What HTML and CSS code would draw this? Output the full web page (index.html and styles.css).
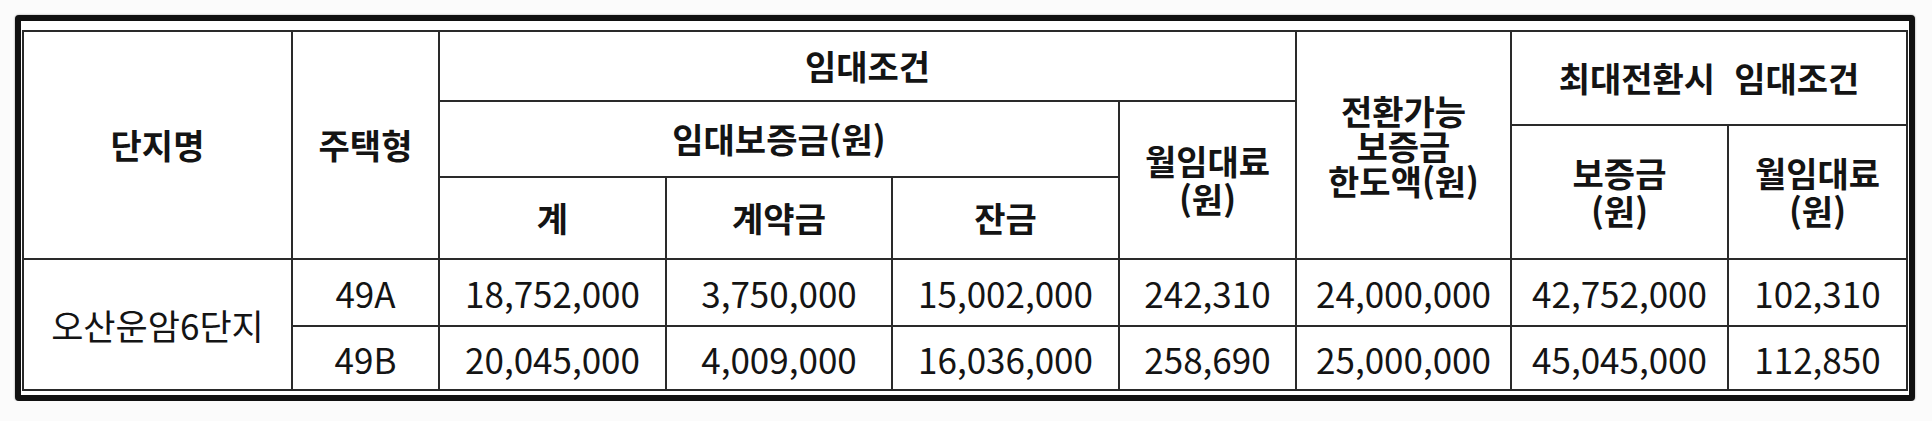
FILE: index.html
```html
<!DOCTYPE html>
<html lang="ko">
<head>
<meta charset="utf-8">
<title>임대조건</title>
<link rel="stylesheet" href="styles.css">
</head>
<body>
<div class="frame">
  <div class="table">
    <div class="cell th c-name">단지명</div>
    <div class="cell th c-type">주택형</div>
    <div class="cell th c-cond">임대조건</div>
    <div class="cell th c-dep">임대보증금(원)</div>
    <div class="cell th c-rent lines2">월임대료<br>(원)</div>
    <div class="cell th c-tot">계</div>
    <div class="cell th c-con">계약금</div>
    <div class="cell th c-bal">잔금</div>
    <div class="cell th c-conv lines3">전환가능<br>보증금<br>한도액(원)</div>
    <div class="cell th c-max">최대전환시&nbsp; 임대조건</div>
    <div class="cell th c-mdep lines2">보증금<br>(원)</div>
    <div class="cell th c-mrent lines2">월임대료<br>(원)</div>

    <div class="cell td c-site">오산운암6단지</div>
    <div class="cell td r1">49A</div>
    <div class="cell td r1">18,752,000</div>
    <div class="cell td r1">3,750,000</div>
    <div class="cell td r1">15,002,000</div>
    <div class="cell td r1">242,310</div>
    <div class="cell td r1">24,000,000</div>
    <div class="cell td r1">42,752,000</div>
    <div class="cell td r1">102,310</div>

    <div class="cell td r2">49B</div>
    <div class="cell td r2">20,045,000</div>
    <div class="cell td r2">4,009,000</div>
    <div class="cell td r2">16,036,000</div>
    <div class="cell td r2">258,690</div>
    <div class="cell td r2">25,000,000</div>
    <div class="cell td r2">45,045,000</div>
    <div class="cell td r2">112,850</div>
  </div>
</div>
</body>
</html>
```

FILE: styles.css
```css
html, body {
  margin: 0;
  padding: 0;
  background: #fbfbfb;
}

body {
  font-family: "Noto Sans CJK KR", "Noto Sans", sans-serif;
  color: #141414;
}

.frame {
  box-sizing: border-box;
  width: 1900px;
  height: 386px;
  margin: 15px 0 0 15px;
  padding: 9px 1px 4px 1px;
  border: 6px solid #111;
  border-radius: 4px;
  background: #fff;
  box-shadow: 0 0 2px rgba(0, 0, 0, 0.45);
}

.table {
  display: grid;
  grid-template-columns: 267px 145px 225px 224px 225px 175px 213px 215px 177px;
  grid-template-rows: 68px 22px 50px 80px 65px 62px;
  gap: 2px;
  padding: 2px;
  background: #2a2a2a;
  width: max-content;
}

.cell {
  background: #fff;
  display: flex;
  align-items: center;
  justify-content: center;
  text-align: center;
  white-space: nowrap;
}

.th {
  font-size: 34px;
  font-weight: 700;
  line-height: 1;
  letter-spacing: 0;
}

.lines2 {
  line-height: 38px;
}

.lines3 {
  line-height: 35px;
}

.td {
  font-size: 35px;
  font-weight: 400;
  line-height: 1;
}

.c-name { grid-column: 1; grid-row: 1 / 5; }
.c-type { grid-column: 2; grid-row: 1 / 5; }
.c-cond { grid-column: 3 / 7; grid-row: 1; }
.c-dep { grid-column: 3 / 6; grid-row: 2 / 4; }
.c-rent { grid-column: 6; grid-row: 2 / 5; }
.c-tot { grid-column: 3; grid-row: 4; }
.c-con { grid-column: 4; grid-row: 4; }
.c-bal { grid-column: 5; grid-row: 4; }
.c-conv { grid-column: 7; grid-row: 1 / 5; }
.c-max { grid-column: 8 / 10; grid-row: 1 / 3; }
.c-mdep { grid-column: 8; grid-row: 3 / 5; }
.c-mrent { grid-column: 9; grid-row: 3 / 5; }

.c-site { grid-column: 1; grid-row: 5 / 7; }
.r1 { grid-row: 5; }
.r2 { grid-row: 6; }
```
